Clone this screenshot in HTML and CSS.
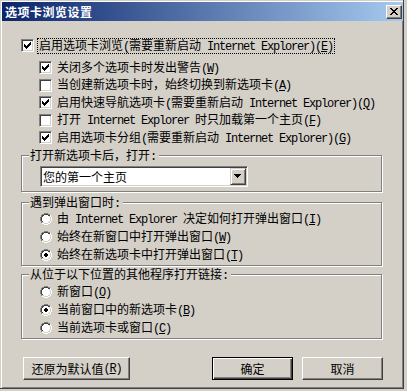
FILE: index.html
```html
<!DOCTYPE html>
<html lang="zh-CN">
<head>
<meta charset="utf-8">
<title>选项卡浏览设置</title>
<link rel="stylesheet" href="styles.css">
</head>
<body>
<div class="window">
  <div class="titlebar">
    <div class="title">选项卡浏览设置</div>
    <div class="close"><svg class="px" width="8" height="7" viewBox="0 0 8 7"><path d="M0 0h2v1H0zM6 0h2v1H6zM1 1h2v1H1zM5 1h2v1H5zM2 2h4v1H2zM3 3h2v1H3zM2 4h4v1H2zM1 5h2v1H1zM5 5h2v1H5zM0 6h2v1H0zM6 6h2v1H6z"/></svg></div>
  </div>
  <div class="content">
    <div class="row">
      <span class="cb"><svg class="px chk" width="11" height="11"><use href="#check"/></svg></span>
      <span class="focus">启用选项卡浏览<span class="a">(</span>需要重新启动<span class="a"> Internet Explorer)(<u>E</u>)</span></span>
    </div>
    <div class="subs">
      <div class="row">
        <span class="cb"><svg class="px chk" width="11" height="11"><use href="#check"/></svg></span>
        <span class="txt">关闭多个选项卡时发出警告<span class="a">(<u>W</u>)</span></span>
      </div>
      <div class="row">
        <span class="cb"></span>
        <span class="txt">当创建新选项卡时，始终切换到新选项卡<span class="a">(<u>A</u>)</span></span>
      </div>
      <div class="row">
        <span class="cb"><svg class="px chk" width="11" height="11"><use href="#check"/></svg></span>
        <span class="txt">启用快速导航选项卡<span class="a">(</span>需要重新启动<span class="a"> Internet Explorer)(<u>Q</u>)</span></span>
      </div>
      <div class="row">
        <span class="cb"></span>
        <span class="txt">打开<span class="a"> Internet Explorer </span>时只加载第一个主页<span class="a">(<u>F</u>)</span></span>
      </div>
      <div class="row">
        <span class="cb"><svg class="px chk" width="11" height="11"><use href="#check"/></svg></span>
        <span class="txt">启用选项卡分组<span class="a">(</span>需要重新启动<span class="a"> Internet Explorer)(<u>G</u>)</span></span>
      </div>
    </div>

    <div class="group g1">
      <span class="glabel">打开新选项卡后，打开<span class="a">:</span></span>
      <div class="combo">
        <span class="combo-text">您的第一个主页</span>
        <span class="combo-btn"><svg class="px" width="7" height="4" viewBox="0 0 7 4"><path d="M0 0h7v1H0zM1 1h5v1H1zM2 2h3v1H2zM3 3h1v1H3z"/></svg></span>
      </div>
    </div>

    <div class="group g2">
      <span class="glabel">遇到弹出窗口时<span class="a">:</span></span>
      <div class="rrow">
        <svg class="px radio" width="12" height="12"><use href="#radio"/></svg>
        <span class="txt">由<span class="a"> Internet Explorer </span>决定如何打开弹出窗口<span class="a">(<u>I</u>)</span></span>
      </div>
      <div class="rrow">
        <svg class="px radio" width="12" height="12"><use href="#radio"/></svg>
        <span class="txt">始终在新窗口中打开弹出窗口<span class="a">(<u>W</u>)</span></span>
      </div>
      <div class="rrow">
        <svg class="px radio" width="12" height="12"><use href="#radio"/><use href="#dot"/></svg>
        <span class="txt">始终在新选项卡中打开弹出窗口<span class="a">(<u>T</u>)</span></span>
      </div>
    </div>

    <div class="group g3">
      <span class="glabel">从位于以下位置的其他程序打开链接<span class="a">:</span></span>
      <div class="rrow">
        <svg class="px radio" width="12" height="12"><use href="#radio"/></svg>
        <span class="txt">新窗口<span class="a">(<u>O</u>)</span></span>
      </div>
      <div class="rrow">
        <svg class="px radio" width="12" height="12"><use href="#radio"/><use href="#dot"/></svg>
        <span class="txt">当前窗口中的新选项卡<span class="a">(<u>B</u>)</span></span>
      </div>
      <div class="rrow">
        <svg class="px radio" width="12" height="12"><use href="#radio"/></svg>
        <span class="txt">当前选项卡或窗口<span class="a">(<u>C</u>)</span></span>
      </div>
    </div>

    <div class="buttons">
      <div class="btn reset">还原为默认值<span class="a">(<u>R</u>)</span></div>
      <div class="btn ok">确定</div>
      <div class="btn cancel">取消</div>
    </div>
  </div>
</div>

<svg class="defs" width="0" height="0">
  <symbol id="check" viewBox="0 0 11 11">
    <path d="M2 4h1v3H2zM3 5h1v3H3zM4 6h1v3H4zM5 5h1v3H5zM6 4h1v3H6zM7 3h1v3H7zM8 2h1v3H8z"/>
  </symbol>
  <symbol id="radio" viewBox="0 0 12 12">
    <path fill="#808080" d="M4 0h4v1H4zM2 1h2v1H2zM8 1h2v1H8zM1 2h1v2H1zM0 4h1v4H0zM1 8h1v2H1z"/>
    <path fill="#ffffff" d="M10 2h1v2h-1zM11 4h1v4h-1zM10 8h1v2h-1zM2 10h2v1H2zM8 10h2v1H8zM4 11h4v1H4z"/>
    <path fill="#404040" d="M4 1h4v1H4zM2 2h2v1H2zM8 2h2v1H8zM2 3h1v1H2zM1 4h1v4H1zM2 8h1v1H2z"/>
    <path fill="#d4d0c8" d="M9 3h1v1H9zM10 4h1v4h-1zM9 8h1v1H9zM2 9h2v1H2zM8 9h2v1H8zM4 10h4v1H4z"/>
    <path fill="#ffffff" d="M4 2h4v1H4zM3 3h6v1H3zM2 4h8v4H2zM3 8h6v1H3zM4 9h4v1H4z"/>
  </symbol>
  <symbol id="dot" viewBox="0 0 12 12">
    <path d="M5 4h2v1H5zM4 5h4v2H4zM5 7h2v1H5z"/>
  </symbol>
</svg>
</body>
</html>
```
FILE: styles.css
```css
* { box-sizing: border-box; }
html, body { margin: 0; padding: 0; }
body {
  width: 407px;
  height: 391px;
  overflow: hidden;
  background: #d4d0c8;
  color: #000;
  font-family: "Noto Sans CJK SC", "Noto Sans", sans-serif;
  font-size: 12px;
  line-height: 12px;
}
.px { display: block; shape-rendering: crispEdges; }
.defs { display: block; width: 0; height: 0; overflow: hidden; }

.window {
  width: 404px;
  height: 389px;
  border-right: 1px solid #404040;
  border-bottom: 1px solid #404040;
  box-shadow: inset 1px 1px #d4d0c8, inset 2px 2px #ffffff, inset -1px -1px #808080;
  padding: 2px 0 0 2px;
}

.titlebar {
  height: 19px;
  width: 401px;
  display: flex;
  align-items: flex-start;
  background: linear-gradient(to right, #0a246a, #a6caf0);
}
.title {
  flex: 1;
  color: #fff;
  font-weight: bold;
  letter-spacing: 0.5px;
  padding-left: 3px;
  margin-top: 4px;
  line-height: 12px;
  white-space: nowrap;
}
.close {
  width: 16px;
  height: 14px;
  margin: 3px 1px 0 0;
  padding: 2px 0 0 3px;
  background: #d4d0c8;
  border: 1px solid;
  border-color: #ffffff #404040 #404040 #ffffff;
  box-shadow: inset -1px -1px #808080;
}

.content { padding: 18px 0 0 19px; }

.row {
  display: flex;
  align-items: center;
  height: 13px;
}
.cb {
  width: 13px;
  height: 13px;
  flex: none;
  background: #fff;
  border: 1px solid;
  border-color: #808080 #ffffff #ffffff #808080;
  box-shadow: inset 1px 1px #404040, inset -1px -1px #d4d0c8;
}
.chk { display: block; }
.txt { margin-left: 5px; white-space: nowrap; }
.focus {
  margin-left: 3px;
  border: 1px dotted #000;
  padding: 0 1px;
  line-height: 12px;
  white-space: nowrap;
}
.a {
  font-family: "Liberation Mono", monospace;
  font-size: 12px;
  letter-spacing: -1.2px;
}
.a u { text-underline-offset: 1px; }

.subs {
  margin: 9px 0 0 18px;
  display: flex;
  flex-direction: column;
  gap: 4.5px;
}

.group {
  position: relative;
  width: 361px;
  border: 1px solid #808080;
  box-shadow: inset 1px 1px #ffffff, 1px 1px #ffffff;
  padding-left: 18px;
}
.glabel {
  position: absolute;
  top: -7px;
  left: 7px;
  padding: 0 3px 0 1px;
  background: #d4d0c8;
  line-height: 12px;
  white-space: nowrap;
}
.g1 { margin-top: 11px; height: 37px; padding-top: 10px; }
.g2 {
  margin-top: 10px;
  height: 64px;
  padding-top: 10px;
  display: flex;
  flex-direction: column;
  gap: 6px;
}
.g3 {
  margin-top: 8px;
  height: 65px;
  padding-top: 11px;
  display: flex;
  flex-direction: column;
  gap: 6px;
}

.combo {
  width: 208px;
  height: 21px;
  display: flex;
  background: #fff;
  border: 1px solid;
  border-color: #808080 #ffffff #ffffff #808080;
  box-shadow: inset 1px 1px #404040, inset -1px -1px #d4d0c8;
  padding: 1px;
}
.combo-text {
  flex: 1;
  padding-left: 1px;
  line-height: 17px;
  white-space: nowrap;
}
.combo-btn {
  width: 16px;
  height: 17px;
  flex: none;
  background: #d4d0c8;
  border: 1px solid;
  border-color: #d4d0c8 #404040 #404040 #d4d0c8;
  box-shadow: inset 1px 1px #ffffff, inset -1px -1px #808080;
  padding: 5px 0 0 3px;
}

.rrow {
  display: flex;
  align-items: center;
  height: 12px;
}
.radio { flex: none; }

.buttons {
  display: flex;
  width: 362px;
  margin-top: 18px;
  padding-left: 2px;
}
.btn {
  height: 23px;
  display: flex;
  align-items: center;
  justify-content: center;
  background: #d4d0c8;
  border: 1px solid;
  border-color: #ffffff #404040 #404040 #ffffff;
  box-shadow: inset -1px -1px #808080;
  white-space: nowrap;
}
.reset { width: 107px; }
.ok {
  width: 81px;
  margin-left: auto;
  border-color: #000;
  box-shadow: inset 1px 1px #ffffff, inset -1px -1px #404040, inset -2px -2px #808080;
}
.cancel { width: 81px; margin-left: 9px; }
```
